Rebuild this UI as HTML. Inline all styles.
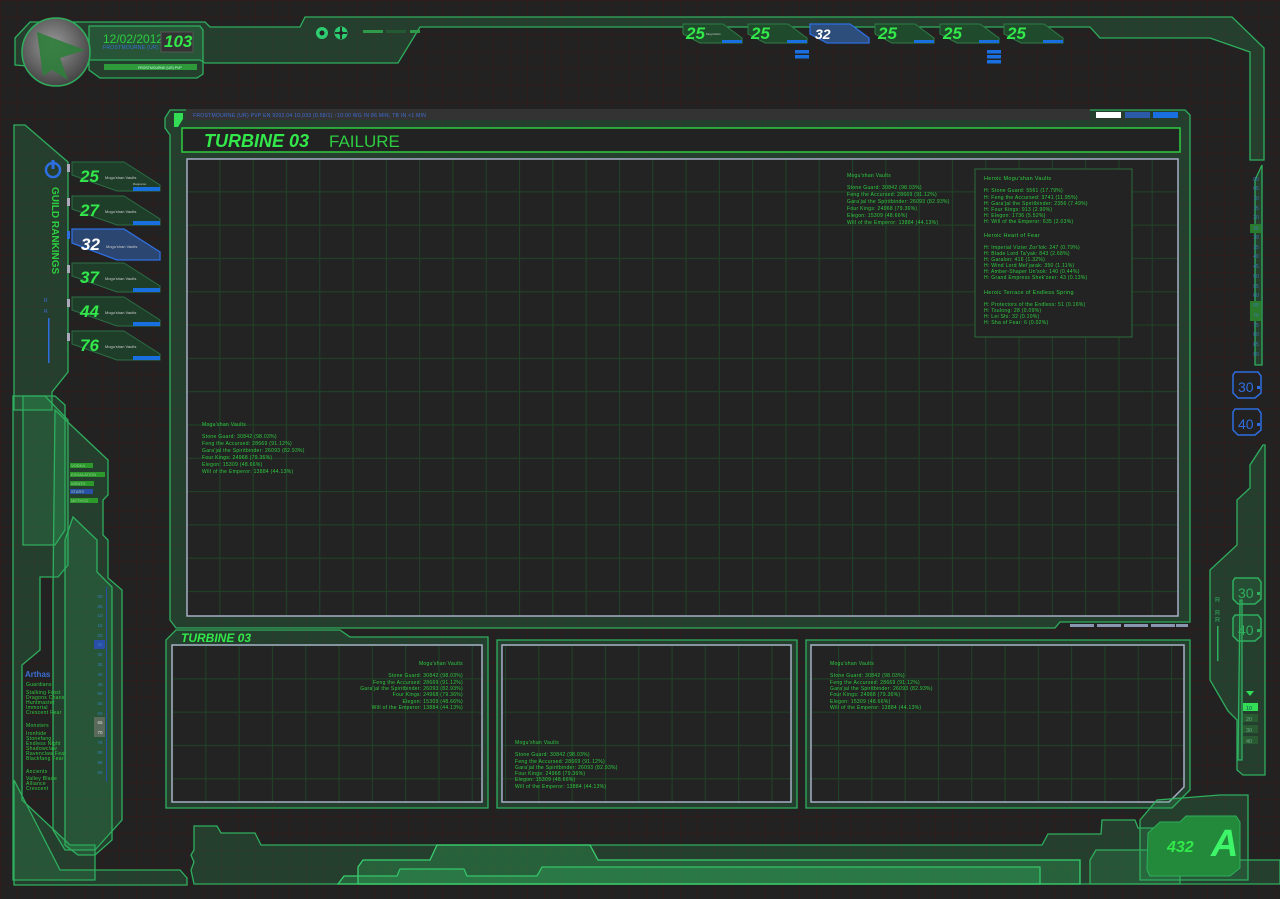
<!DOCTYPE html>
<html><head><meta charset="utf-8"><style>
html,body{margin:0;padding:0;background:#222;}
svg{display:block}
text{font-family:"Liberation Sans",sans-serif;}
.t{fill:#2ecc40;font-size:5px;letter-spacing:.3px}
.tb{fill:#3d6fd6;font-size:5px;letter-spacing:.3px}
.fr{fill:rgba(46,170,90,0.22);stroke:#2fae5e;stroke-width:1.3}
.fr2{fill:rgba(46,170,90,0.32);stroke:#38d070;stroke-width:1.3}
.num{font-weight:bold;font-style:italic;fill:#33e84a;font-size:17px}
</style></head><body>
<svg width="1280" height="899" viewBox="0 0 1280 899" xmlns="http://www.w3.org/2000/svg">
<defs>
<pattern id="bg" width="17" height="17" patternUnits="userSpaceOnUse">
<rect width="17" height="17" fill="#222"/><path d="M0 .5H17M.5 0V17" stroke="#2f1d1d" stroke-width="1"/>
</pattern>
<pattern id="gg" x="186" y="158" width="33.3" height="33.3" patternUnits="userSpaceOnUse">
<rect width="33.3" height="33.3" fill="#232323"/><path d="M0 .5H34M.5 0V34" stroke="#1f4226" stroke-width="1.2"/>
</pattern>
<pattern id="gg2" x="172" y="645" width="33.3" height="33.3" patternUnits="userSpaceOnUse">
<rect width="33.3" height="33.3" fill="#232323"/><path d="M0 .5H34M.5 0V34" stroke="#1f4226" stroke-width="1.2"/>
</pattern>
<radialGradient id="lg" cx="45%" cy="40%" r="60%"><stop offset="0" stop-color="#9a9a9a"/><stop offset="1" stop-color="#444"/></radialGradient>
</defs>
<rect width="1280" height="899" fill="url(#bg)"/>

<!-- top frame -->
<polygon class="fr" points="15,38 30,22 205,22 210,27 300,27 305,17 1232,17 1264,48 1264,160 1250,160 1250,52 1210,38 1100,38 1090,27 420,27 398,63 205,63 200,60 88,60 80,70 15,65"/>
<polygon class="fr" points="89,26 200,26 203,30 203,74 197,78 100,78 89,70"/>
<circle cx="56" cy="52" r="34" fill="url(#lg)" stroke="#2fae5e" stroke-width="1.5"/>
<polygon points="37,32 85,50 60,58 68,80 52,70 43,76" fill="#2e7d3a" opacity=".9"/>
<text x="103" y="43" fill="#2ecc40" font-size="12">12/02/2012</text>
<text x="103" y="49" class="tb" font-size="4">FROSTMOURNE (UR) PVP</text>
<rect x="161" y="32" width="32" height="20" fill="#333" stroke="#555"/>
<text x="164" y="47" class="num" font-size="15">103</text>
<rect x="104" y="64" width="93" height="6" fill="#2f9a3a"/>
<text x="138" y="69" fill="#cfe" font-size="3.5">FROSTMOURNE (UR) PVP</text>
<circle cx="322" cy="33" r="6" fill="#2ecc71"/><circle cx="322" cy="33" r="2.5" fill="#222"/>
<circle cx="341" cy="33" r="6.5" fill="#2ecc71"/><path d="M335 33h12M341 27v12" stroke="#222" stroke-width="1.8"/><circle cx="341" cy="33" r="2" fill="#222"/>
<rect x="363" y="30" width="20" height="3" fill="#2f9a4a"/><rect x="386" y="30" width="20" height="3" fill="#245a33"/><rect x="410" y="30" width="10" height="3" fill="#2f9a4a"/>

<!-- top cards -->
<g>
<polygon points="683,24 723,24 742,38 742,43 700,43 683,34" fill="#1f4a2c" stroke="#2e7d45"/><rect x="722" y="40" width="20" height="3" fill="#1a6fe0"/><text x="686" y="39" class="num" font-size="14">25</text><text x="706" y="35" fill="#ccc" font-size="3">Mogu'shan</text>
<polygon points="748,24 788,24 807,38 807,43 765,43 748,34" fill="#1f4a2c" stroke="#2e7d45"/><rect x="787" y="40" width="20" height="3" fill="#1a6fe0"/><text x="751" y="39" class="num" font-size="14">25</text>
<rect x="795" y="50" width="14" height="3.5" fill="#1a6fe0"/><rect x="795" y="55" width="14" height="3.5" fill="#1a6fe0"/>
<polygon points="810,24 850,24 869,38 869,43 827,43 810,34" fill="#2d4d7a" stroke="#2f6fe0" stroke-width="1.3"/><text x="815" y="39" font-weight="bold" font-style="italic" fill="#fff" font-size="14">32</text>
<polygon points="875,24 915,24 934,38 934,43 892,43 875,34" fill="#1f4a2c" stroke="#2e7d45"/><rect x="914" y="40" width="20" height="3" fill="#1a6fe0"/><text x="878" y="39" class="num" font-size="14">25</text>
<polygon points="940,24 980,24 999,38 999,43 957,43 940,34" fill="#1f4a2c" stroke="#2e7d45"/><rect x="979" y="40" width="20" height="3" fill="#1a6fe0"/><text x="943" y="39" class="num" font-size="14">25</text>
<rect x="987" y="50" width="14" height="3.5" fill="#1a6fe0"/><rect x="987" y="55" width="14" height="3.5" fill="#1a6fe0"/><rect x="987" y="60" width="14" height="3.5" fill="#1a6fe0"/>
<polygon points="1004,24 1044,24 1063,38 1063,43 1021,43 1004,34" fill="#1f4a2c" stroke="#2e7d45"/><rect x="1043" y="40" width="20" height="3" fill="#1a6fe0"/><text x="1007" y="39" class="num" font-size="14">25</text>
</g>

<!-- left frames -->
<polygon class="fr" points="14,125 25,125 68,162 68,372 52,392 52,410 14,410"/>
<polygon class="fr" points="23,396 55,396 65,405 65,530 55,545 23,545"/>
<polygon class="fr" points="13,396 45,396 68,420 68,565 58,577 40,577 40,650 22,665 22,800 70,845 95,845 95,880 13,880"/>
<polygon class="fr" points="55,410 108,460 108,495 103,500 103,535 108,540 108,578 122,590 122,820 95,850 65,850 53,830 53,590"/>
<polygon class="fr" points="73,517 97,540 97,572 112,587 112,840 95,855 78,855 65,845 65,540"/>
<polygon class="fr" points="14,780 60,870 180,870 187,878 187,885 14,885"/>
<circle cx="53" cy="170" r="7" fill="none" stroke="#2d6ee0" stroke-width="2.5"/><rect x="51.5" y="160" width="3" height="9" fill="#2d6ee0"/>
<text x="52" y="187" fill="#2ecc40" font-size="10" font-weight="bold" transform="rotate(90 52 187)">GUILD RANKINGS</text>
<text x="44" y="302" class="tb" font-size="7">R</text><text x="44" y="313" class="tb" font-size="7">R</text><rect x="48" y="318" width="1.5" height="45" fill="#2d6ee0"/>
<g>
<polygon points="72,162 124,162 160,185 160,191 117,191 72,175" fill="#1e3e29" stroke="#2c6e44"/><rect x="133" y="187" width="27" height="4" fill="#1a6fe0"/><rect x="67" y="164" width="3" height="8" fill="#aab"/><text x="80" y="182" class="num">25</text><text x="105" y="179" fill="#ccc" font-size="4">Mogu'shan Vaults</text><text x="133" y="185" fill="#ccc" font-size="3">Ragnaros</text>
<polygon points="72,196 124,196 160,219 160,225 117,225 72,209" fill="#1e3e29" stroke="#2c6e44"/><rect x="133" y="221" width="27" height="4" fill="#1a6fe0"/><rect x="67" y="198" width="3" height="8" fill="#aab"/><text x="80" y="216" class="num">27</text><text x="105" y="213" fill="#ccc" font-size="4">Mogu'shan Vaults</text>
<polygon points="72,229 124,229 160,252 160,260 117,260 72,243" fill="#2b4670" stroke="#2f6fe0" stroke-width="1.3"/><rect x="67" y="231" width="3" height="8" fill="#2d6ee0"/><text x="81" y="250" font-weight="bold" font-style="italic" fill="#fff" font-size="17">32</text><text x="106" y="248" fill="#ccc" font-size="4">Mogu'shan Vaults</text>
<polygon points="72,263 124,263 160,286 160,292 117,292 72,276" fill="#1e3e29" stroke="#2c6e44"/><rect x="133" y="288" width="27" height="4" fill="#1a6fe0"/><rect x="67" y="265" width="3" height="8" fill="#aab"/><text x="80" y="283" class="num">37</text><text x="105" y="280" fill="#ccc" font-size="4">Mogu'shan Vaults</text>
<polygon points="72,297 124,297 160,320 160,326 117,326 72,310" fill="#1e3e29" stroke="#2c6e44"/><rect x="133" y="322" width="27" height="4" fill="#1a6fe0"/><rect x="67" y="299" width="3" height="8" fill="#aab"/><text x="80" y="317" class="num">44</text><text x="105" y="314" fill="#ccc" font-size="4">Mogu'shan Vaults</text>
<polygon points="72,331 124,331 160,354 160,360 117,360 72,344" fill="#1e3e29" stroke="#2c6e44"/><rect x="133" y="356" width="27" height="4" fill="#1a6fe0"/><rect x="67" y="333" width="3" height="8" fill="#aab"/><text x="80" y="351" class="num">76</text><text x="105" y="348" fill="#ccc" font-size="4">Mogu'shan Vaults</text>
</g>
<g font-size="4" fill="#9c9">
<rect x="70" y="463" width="23" height="5" fill="#2b9a2b"/><text x="71" y="467">VODKA</text>
<rect x="70" y="472" width="35" height="5" fill="#2b9a2b"/><text x="71" y="476">EXHALATION</text>
<rect x="70" y="481" width="24" height="5" fill="#2b9a2b"/><text x="71" y="485">WRATH</text>
<rect x="70" y="489" width="23" height="5" fill="#2a4fa8"/><text x="71" y="493">STARS</text>
<rect x="70" y="498" width="28" height="5" fill="#2b9a2b"/><text x="71" y="502">METHOD</text>
</g>
<g font-size="4.5" fill="#3a7bbd" text-anchor="middle">
<text x="100" y="598">00</text><text x="100" y="608">05</text><text x="100" y="617">10</text><text x="100" y="627">15</text><text x="100" y="637">20</text>
<rect x="94" y="640" width="11" height="9" fill="#2a4fa8"/><text x="100" y="646">25</text>
<text x="100" y="656">30</text><text x="100" y="666">35</text><text x="100" y="676">40</text><text x="100" y="686">45</text><text x="100" y="695">50</text><text x="100" y="705">55</text><text x="100" y="715">60</text>
<rect x="94" y="717" width="11" height="20" fill="#5a6a5a"/><text x="100" y="724" fill="#ddd">65</text><text x="100" y="734" fill="#ddd">70</text>
<text x="100" y="744">75</text><text x="100" y="754">80</text><text x="100" y="764">85</text><text x="100" y="774">90</text>
</g>
<rect x="106" y="587" width="1" height="195" fill="#2a4fa8"/>
<text x="25" y="677" fill="#3d6fd6" font-size="8" font-weight="bold">Arthas</text>
<g class="t" font-size="3.5"><text x="26" y="686">Guardians</text><text x="26" y="694">Stalking Frost</text><text x="26" y="699">Dragons Chaos</text><text x="26" y="704">Huntmaster</text><text x="26" y="709">Immortal</text><text x="26" y="714">Crescent Fear</text><text x="26" y="727">Monsters</text><text x="26" y="735">Ironhide</text><text x="26" y="740">Stonefang</text><text x="26" y="745">Endless Night</text><text x="26" y="750">Shadowclaw</text><text x="26" y="755">Ravenclaw Fear</text><text x="26" y="760">Blackfang Fear</text><text x="26" y="773">Ancients</text><text x="26" y="780">Valley Blade</text><text x="26" y="785">Alliance</text><text x="26" y="790">Crescent</text></g>

<!-- main panel -->
<polygon class="fr" points="170,110 1185,110 1190,115 1190,622 1060,622 1055,628 176,628 170,620 170,135 165,128 165,118"/>
<rect x="186" y="109" width="904" height="11" fill="#333"/>
<polygon points="174,113 183,113 183,119 178,127 174,127" fill="#33dd55"/>
<text x="193" y="117" class="tb" font-size="4.5">FROSTMOURNE (UR) PVP    EN      9202.04      10,033 (0.58/1)    ↑10:00      WG IN 86 MIN, TB IN &lt;1 MIN</text>
<rect x="1096" y="112" width="25" height="6" fill="#fff"/><rect x="1125" y="112" width="25" height="6" fill="#2b5ba8"/><rect x="1153" y="112" width="25" height="6" fill="#1a6fe0"/>
<rect x="182" y="128" width="998" height="24" fill="#222" stroke="#2ecc40" stroke-width="1.5"/>
<text x="204" y="147" font-weight="bold" font-style="italic" fill="#33e84a" font-size="18">TURBINE 03</text>
<text x="329" y="147" fill="#2ecc40" font-size="17">FAILURE</text>
<rect x="187" y="159" width="991" height="457" fill="url(#gg)" stroke="#a7afc6" stroke-width="1.5"/>
<g class="t"><text x="847" y="177">Mogu'shan Vaults</text><text x="847" y="189">Stone Guard: 30842 (98.03%)</text><text x="847" y="196">Feng the Accursed: 28669 (91.12%)</text><text x="847" y="203">Gara'jal the Spiritbinder: 26093 (82.93%)</text><text x="847" y="210">Four Kings: 24968 (79.36%)</text><text x="847" y="217">Elegon: 15309 (48.66%)</text><text x="847" y="224">Will of the Emperor: 13884 (44.13%)</text></g>
<rect x="975" y="169" width="157" height="168" fill="#232323" stroke="#2b6e3a"/>
<g class="t" font-size="4.5"><text x="984" y="180" font-size="5.5">Heroic Mogu'shan Vaults</text><text x="984" y="192">H: Stone Guard: 5561 (17.79%)</text><text x="984" y="199">H: Feng the Accursed: 3741 (11.95%)</text><text x="984" y="205">H: Gara'jal the Spiritbinder: 2356 (7.49%)</text><text x="984" y="211">H: Four Kings: 913 (2.90%)</text><text x="984" y="217">H: Elegon: 1736 (5.52%)</text><text x="984" y="223">H: Will of the Emperor: 635 (2.03%)</text>
<text x="984" y="237" font-size="5.5">Heroic Heart of Fear</text><text x="984" y="249">H: Imperial Vizier Zor'lok: 247 (0.79%)</text><text x="984" y="255">H: Blade Lord Ta'yak: 843 (2.68%)</text><text x="984" y="261">H: Garalon: 416 (1.32%)</text><text x="984" y="267">H: Wind Lord Mel'jarak: 350 (1.11%)</text><text x="984" y="273">H: Amber-Shaper Un'sok: 140 (0.44%)</text><text x="984" y="279">H: Grand Empress Shek'zeer: 43 (0.13%)</text>
<text x="984" y="294" font-size="5.5">Heroic Terrace of Endless Spring</text><text x="984" y="306">H: Protectors of the Endless: 51 (0.16%)</text><text x="984" y="312">H: Tsulong: 28 (0.09%)</text><text x="984" y="318">H: Lei Shi: 32 (0.10%)</text><text x="984" y="324">H: Sha of Fear: 6 (0.02%)</text></g>
<g class="t"><text x="202" y="426">Mogu'shan Vaults</text><text x="202" y="438">Stone Guard: 30842 (98.03%)</text><text x="202" y="445">Feng the Accursed: 28669 (91.12%)</text><text x="202" y="452">Gara'jal the Spiritbinder: 26093 (82.93%)</text><text x="202" y="459">Four Kings: 24968 (79.36%)</text><text x="202" y="466">Elegon: 15309 (48.66%)</text><text x="202" y="473">Will of the Emperor: 13884 (44.13%)</text></g>
<g fill="#8a96b0"><rect x="1070" y="624" width="24" height="3"/><rect x="1097" y="624" width="24" height="3"/><rect x="1124" y="624" width="24" height="3"/><rect x="1151" y="624" width="24" height="3"/><rect x="1176" y="624" width="12" height="3"/></g>

<!-- bottom panels -->
<polygon class="fr" points="176,630 340,630 350,637 488,637 488,808 166,808 166,640"/>
<text x="181" y="642" font-weight="bold" font-style="italic" fill="#33e84a" font-size="12">TURBINE 03</text>
<rect x="172" y="645" width="310" height="157" fill="url(#gg2)" stroke="#a7afc6" stroke-width="1.5"/>
<polygon class="fr" points="497,640 502,640 797,640 797,808 497,808"/>
<rect x="502" y="645" width="289" height="157" fill="url(#gg2)" stroke="#a7afc6" stroke-width="1.5"/>
<polygon class="fr" points="806,640 1190,640 1190,790 1172,808 806,808"/>
<polygon points="811,645 1184,645 1184,787 1169,802 811,802" fill="url(#gg2)" stroke="#a7afc6" stroke-width="1.5"/>
<g class="t" text-anchor="end"><text x="463" y="665">Mogu'shan Vaults</text><text x="463" y="677">Stone Guard: 30842 (98.03%)</text><text x="463" y="684">Feng the Accursed: 28669 (91.12%)</text><text x="463" y="690">Gara'jal the Spiritbinder: 26093 (82.93%)</text><text x="463" y="696">Four Kings: 24968 (79.36%)</text><text x="463" y="703">Elegon: 15309 (48.66%)</text><text x="463" y="709">Will of the Emperor: 13884 (44.13%)</text></g>
<g class="t"><text x="515" y="744">Mogu'shan Vaults</text><text x="515" y="756">Stone Guard: 30842 (98.03%)</text><text x="515" y="763">Feng the Accursed: 28669 (91.12%)</text><text x="515" y="769">Gara'jal the Spiritbinder: 26093 (82.93%)</text><text x="515" y="775">Four Kings: 24968 (79.36%)</text><text x="515" y="781">Elegon: 15309 (48.66%)</text><text x="515" y="788">Will of the Emperor: 13884 (44.13%)</text></g>
<g class="t"><text x="830" y="665">Mogu'shan Vaults</text><text x="830" y="677">Stone Guard: 30842 (98.03%)</text><text x="830" y="684">Feng the Accursed: 28669 (91.12%)</text><text x="830" y="690">Gara'jal the Spiritbinder: 26093 (82.93%)</text><text x="830" y="696">Four Kings: 24968 (79.36%)</text><text x="830" y="703">Elegon: 15309 (48.66%)</text><text x="830" y="709">Will of the Emperor: 13884 (44.13%)</text></g>

<!-- bottom band -->
<polygon class="fr" points="194,826 217,826 221,833 255,833 261,845 1042,845 1048,834 1101,834 1102,820 1135,820 1138,828 1180,828 1180,884 194,884 191,870 194,862 191,855 194,850"/>
<polygon class="fr2" points="338,884 344,876 397,876 400,869 464,869 467,876 537,876 542,867 608,867 1040,867 1040,884"/>
<polygon class="fr2" points="358,884 358,867 363,860 430,860 437,845 527,845 590,845 598,860 1080,860 1080,884"/>
<polygon class="fr" points="1090,884 1090,860 1096,850 1180,850 1210,860 1280,860 1280,884"/>
<polygon class="fr" points="1140,820 1157,800 1220,795 1248,795 1248,880 1140,880"/>
<polygon points="1148,833 1160,822 1180,822 1186,816 1236,816 1240,822 1240,868 1230,876 1150,876 1147,870" fill="#228a3a" stroke="#2fae5e"/>
<text x="1167" y="852" font-weight="bold" font-style="italic" fill="#33e84a" font-size="16">432</text>
<text x="1211" y="856" font-weight="bold" font-style="italic" fill="#3ef56a" font-size="38">A</text>

<!-- right frames -->
<polygon class="fr" points="1255,180 1262,165 1262,365 1255,365"/>
<g font-size="5" fill="#3a7bbd" text-anchor="middle">
<text x="1256" y="181">00</text><text x="1256" y="190">05</text><text x="1256" y="200">10</text><text x="1256" y="210">15</text><text x="1256" y="219">20</text>
<rect x="1250" y="224" width="11" height="9" fill="#2b7a2b"/><text x="1256" y="230">25</text>
<text x="1256" y="239">30</text><text x="1256" y="249">35</text><text x="1256" y="258">40</text><text x="1256" y="268">45</text><text x="1256" y="278">50</text><text x="1256" y="288">55</text><text x="1256" y="297">60</text>
<rect x="1250" y="301" width="11" height="20" fill="#2b7a2b"/><text x="1256" y="307">65</text><text x="1256" y="317">70</text>
<text x="1256" y="327">75</text><text x="1256" y="336">80</text><text x="1256" y="346">85</text><text x="1256" y="356">90</text>
</g>
<polygon points="1235,372 1258,372 1261,376 1261,393 1255,398 1238,398 1233,393 1233,375" fill="none" stroke="#2d6ee0" stroke-width="1.5"/><text x="1238" y="392" fill="#2d6ee0" font-size="14">30</text><rect x="1257" y="386" width="3" height="3" fill="#2d6ee0"/>
<polygon points="1235,409 1258,409 1261,413 1261,430 1255,435 1238,435 1233,430 1233,412" fill="none" stroke="#2d6ee0" stroke-width="1.5"/><text x="1238" y="429" fill="#2d6ee0" font-size="14">40</text><rect x="1257" y="423" width="3" height="3" fill="#2d6ee0"/>
<polygon class="fr" points="1263,445 1265,445 1265,775 1243,775 1237,770 1237,720 1228,711 1210,680 1210,570 1237,545 1237,500 1250,488 1250,465"/>
<polygon class="fr" points="1240,600 1242,600 1242,760 1238,760"/>
<polygon points="1235,578 1258,578 1261,582 1261,599 1255,604 1238,604 1233,599 1233,581" fill="rgba(46,170,90,0.15)" stroke="#2fae5e" stroke-width="1.5"/><text x="1238" y="598" fill="#2fae5e" font-size="14">30</text><rect x="1257" y="592" width="3" height="3" fill="#2fae5e"/>
<polygon points="1235,615 1258,615 1261,619 1261,636 1255,641 1238,641 1233,636 1233,618" fill="rgba(46,170,90,0.15)" stroke="#2fae5e" stroke-width="1.5"/><text x="1238" y="635" fill="#2fae5e" font-size="14">40</text><rect x="1257" y="629" width="3" height="3" fill="#2fae5e"/>
<text x="1215" y="602" fill="#2fae5e" font-size="7">R</text><text x="1215" y="615" fill="#2fae5e" font-size="7">R</text><text x="1215" y="622" fill="#2fae5e" font-size="7">R</text><rect x="1217" y="626" width="1.5" height="35" fill="#2fae5e"/>
<polygon points="1246,691 1254,691 1250,696" fill="#33dd55"/>
<rect x="1243" y="703" width="15" height="8" fill="#33dd55"/><text x="1246" y="710" fill="#155" font-size="5.5">10</text>
<rect x="1243" y="714" width="15" height="8" fill="#2a5a32"/><text x="1246" y="721" fill="#6a8" font-size="5.5">20</text>
<rect x="1243" y="725" width="15" height="8" fill="#2a5a32"/><text x="1246" y="732" fill="#6a8" font-size="5.5">30</text>
<rect x="1243" y="736" width="15" height="8" fill="#2a5a32"/><text x="1246" y="743" fill="#6a8" font-size="5.5">40</text>
</svg>
</body></html>
